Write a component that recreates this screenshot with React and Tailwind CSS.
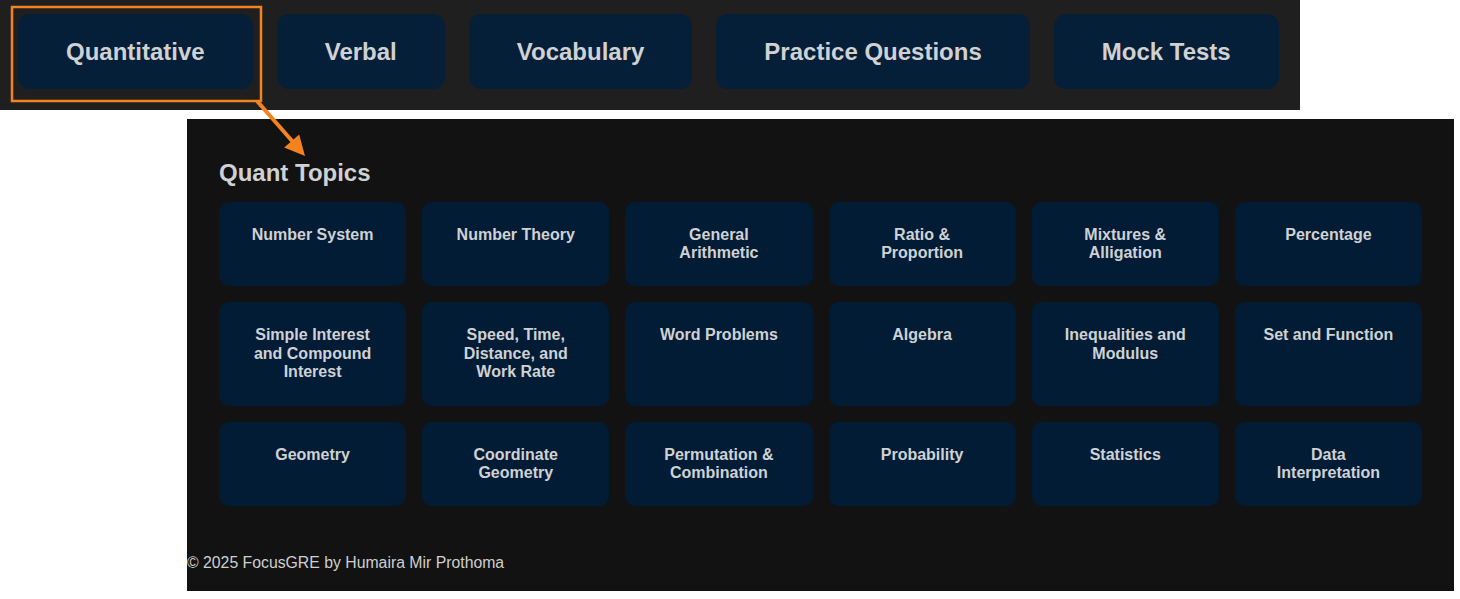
import React from "react";

const tabs = ["Quantitative", "Verbal", "Vocabulary", "Practice Questions", "Mock Tests"];

const topics = [
  ["Number System"],
  ["Number Theory"],
  ["General", "Arithmetic"],
  ["Ratio &", "Proportion"],
  ["Mixtures &", "Alligation"],
  ["Percentage"],
  ["Simple Interest", "and Compound", "Interest"],
  ["Speed, Time,", "Distance, and", "Work Rate"],
  ["Word Problems"],
  ["Algebra"],
  ["Inequalities and", "Modulus"],
  ["Set and Function"],
  ["Geometry"],
  ["Coordinate", "Geometry"],
  ["Permutation &", "Combination"],
  ["Probability"],
  ["Statistics"],
  ["Data", "Interpretation"],
];

const font = { fontFamily: '"Liberation Sans", Arial, sans-serif' };

const App = () => {
  return (
    <div className="relative w-[1460px] h-[599px] bg-white overflow-hidden" style={font}>
      {/* Top nav */}
      <nav className="w-[1300px] h-[110px] bg-[#1f1f1f] flex gap-6 pl-[18px] pt-[14px]">
        {tabs.map((t) => (
          <button
            key={t}
            className="h-[75px] px-12 rounded-xl bg-[#051f38] text-[#d0d1d3] text-2xl font-bold"
          >
            {t}
          </button>
        ))}
      </nav>

      {/* Topics panel */}
      <section className="mt-[9px] ml-[187px] w-[1267px] h-[472px] bg-[#121212] flex flex-col">
        <div className="px-8 pt-10">
          <h2 className="text-[24px] leading-[27.6px] font-bold text-[#d0d1d3] mb-[15px]">Quant Topics</h2>
          <div className="grid grid-cols-6 gap-4">
            {topics.map((lines) => (
              <div
                key={lines.join(" ")}
                className="min-h-[84px] p-6 rounded-[10px] bg-[#021c36] text-[#d0d1d3] text-base leading-[18.4px] font-bold text-center"
              >
                {lines.map((l) => (
                  <div key={l}>{l}</div>
                ))}
              </div>
            ))}
          </div>
        </div>
        <footer className="mt-12 text-[15.8px] leading-[18.4px] text-[#cfcfcf]">
          © 2025 FocusGRE by Humaira Mir Prothoma
        </footer>
      </section>

      {/* Annotation overlay */}
      <svg className="absolute top-0 left-0 pointer-events-none" width="1460" height="599">
        <rect x="12" y="7" width="249" height="94" fill="none" stroke="#f4821f" strokeWidth="2.5" />
        <line x1="257" y1="101" x2="293" y2="142" stroke="#f4821f" strokeWidth="4" />
        <polygon points="305,156 284.2,147.6 299.2,134.4" fill="#f4821f" />
      </svg>
    </div>
  );
};

export default App;
